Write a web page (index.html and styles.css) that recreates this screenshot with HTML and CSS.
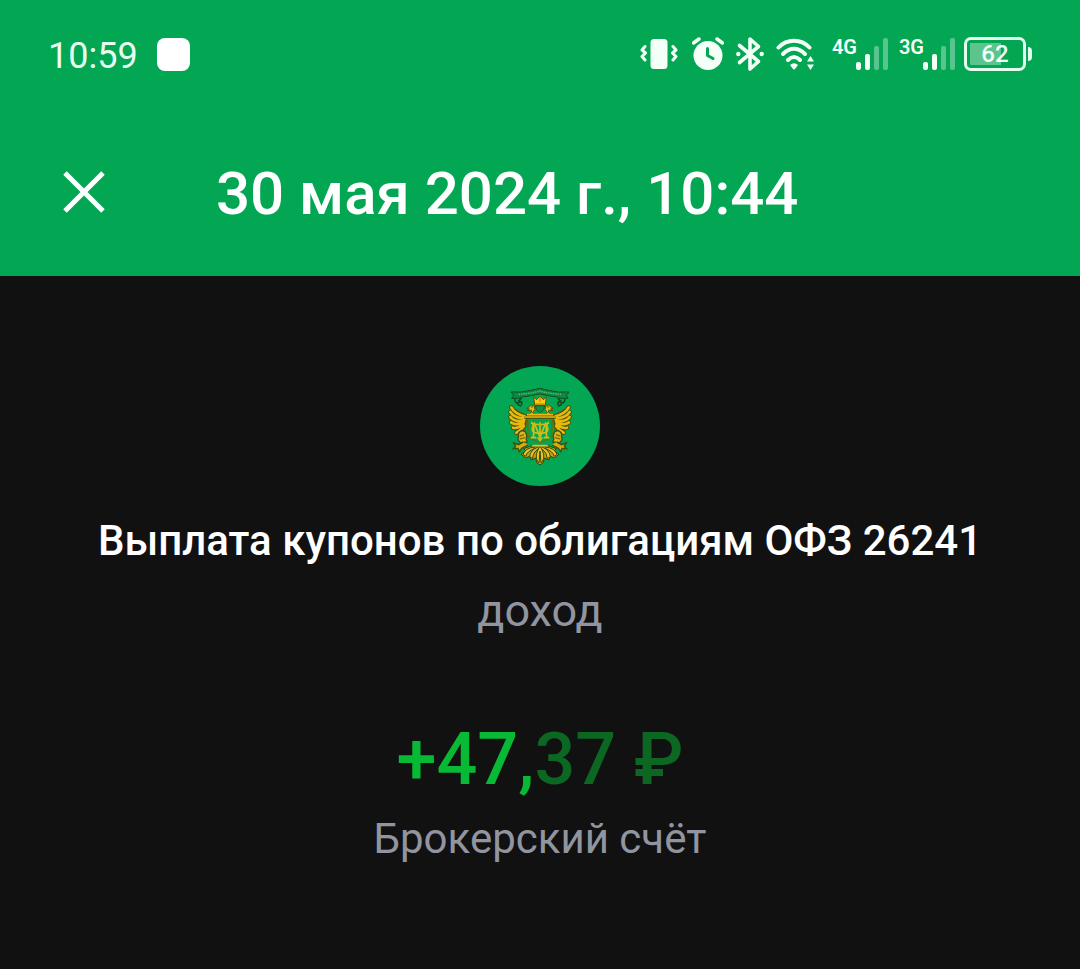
FILE: index.html
```html
<!DOCTYPE html>
<html lang="ru">
<head>
<meta charset="utf-8">
<meta name="viewport" content="width=device-width, initial-scale=1">
<title>Выплата купонов</title>
<link rel="stylesheet" href="styles.css">
</head>
<body>
<header class="top">
  <div class="status">
    <time class="clock">10:59</time>
    <span class="notice"></span>
    <div class="indicators">
      <svg class="vibrate" width="38" height="36" viewBox="0 0 38 36" aria-hidden="true">
        <rect x="10.500" y="3" width="17" height="30" rx="3.500" fill="#f4fff8"/>
        <path d="M5 10.500l-3 3.500 3.500 3-3.500 3.500 3 3.500M33 10.500l3 3.500-3.500 3 3.500 3.500-3 3.500" fill="none" stroke="#f4fff8" stroke-width="3" stroke-linejoin="round" stroke-linecap="round"/>
      </svg>
      <svg class="alarm" width="32" height="36" viewBox="0 0 32 36" aria-hidden="true">
        <circle cx="16" cy="19.500" r="14.500" fill="#f4fff8"/>
        <path d="M1.500 7L7 3M30.500 7L25 3" stroke="#f4fff8" stroke-width="3.500" stroke-linecap="round"/>
        <path d="M15.500 12.500V19.500L21 22.500" fill="none" stroke="#03a653" stroke-width="3" stroke-linecap="round" stroke-linejoin="round"/>
      </svg>
      <svg class="bluetooth" width="28" height="36" viewBox="0 0 28 36" aria-hidden="true">
        <path d="M3.500 9.500L22.500 25.500L14 33V3L22.500 10.500L3.500 26.500" fill="none" stroke="#f4fff8" stroke-width="3.600" stroke-linecap="round" stroke-linejoin="round"/>
        <circle cx="2.300" cy="18" r="2.200" fill="#f4fff8"/><circle cx="25.700" cy="18" r="2.200" fill="#f4fff8"/>
      </svg>
      <svg class="wifi" width="40" height="36" viewBox="0 0 40 36" aria-hidden="true">
        <g fill="none" stroke="#f4fff8" stroke-width="4" stroke-linecap="round">
          <path d="M2.500 11.500C11 2.500 25 2.500 33.500 11.500"/><path d="M7 18C14 11 22 11 29 18"/><path d="M12 24C16 20 20 20 24 24"/>
        </g>
        <path d="M14 29Q18 25.500 22 29L19 33Q18 34 17 33ZM31 25.500L34.500 20L38 25.500ZM31 28.500L34.500 34L38 28.500Z" fill="#f4fff8"/>
      </svg>
      <div class="network">
        <span class="band">4G</span>
        <svg class="bars" width="33" height="36" viewBox="0 0 33 36" aria-hidden="true"><g fill="#f4fff8"><rect y="26" width="5" height="8" rx="2"/><rect x="9" y="18" width="5" height="16" rx="2"/><g opacity=".35"><rect x="18" y="10" width="5" height="24" rx="2"/><rect x="27" y="2" width="5" height="32" rx="2"/></g></g></svg>
      </div>
      <div class="network">
        <span class="band">3G</span>
        <svg class="bars" width="33" height="36" viewBox="0 0 33 36" aria-hidden="true"><g fill="#f4fff8"><rect y="26" width="5" height="8" rx="2"/><rect x="9" y="18" width="5" height="16" rx="2"/><g opacity=".35"><rect x="18" y="10" width="5" height="24" rx="2"/><rect x="27" y="2" width="5" height="32" rx="2"/></g></g></svg>
      </div>
      <div class="battery"><span class="shell">62</span><span class="cap"></span></div>
    </div>
  </div>
  <div class="appbar">
    <button class="close" type="button" aria-label="Закрыть">
      <svg width="44" height="44" viewBox="0 0 44 44" aria-hidden="true"><path d="M3 3L41 41M41 3L3 41" stroke="#fff" stroke-width="5"/></svg>
    </button>
    <h1 class="title">30 мая 2024 г., 10:44</h1>
  </div>
</header>
<main class="details">
  <svg class="emblem" width="120" height="120" viewBox="30 30 360 360" role="img" aria-label="Эмблема Минфина">
    <defs>
      <path id="feathers" d="M124 154Q134 174 168 182M121 168Q132 186 165 188M121 183Q133 199 162 194M123 199Q137 210 161 199M129 215Q143 219 160 205M139 230Q151 225 162 210"/>
      <g id="side">
        <path d="M124 152L172 178L176 188L170 208L164 230L151 228L141 231L128 214Z" fill="#6b650a"/>
        <use href="#feathers" fill="none" stroke="#3f500d" stroke-width="13" stroke-linecap="round"/>
        <use href="#feathers" fill="none" stroke="#e8b80f" stroke-width="8" stroke-linecap="round"/>
        <path d="M204 177Q193 178 188 170Q199 162 193 150Q184 143 177 153L170 157L178 159L171 164L184 163Q187 168 180 173L169 178Z" fill="#e3b714" stroke="#59560b" stroke-width="3"/>
        <circle cx="186" cy="153" r="2" fill="#333d0a"/>
        <path d="M155 224Q142 230 146 242Q140 250 151 260L172 258Q166 247 171 240L165 226Z" fill="#e1b61c" stroke="#3b510d" stroke-width="4"/>
        <path d="M150 240L162 236M149 249L165 245" stroke="#806b08" stroke-width="4"/>
        <path d="M160 258L146 266L131 261L137 271L130 278L144 277L148 287L155 277L174 267" fill="#d8ac0d" stroke="#3b510d" stroke-width="4"/>
      </g>
    </defs>
    <circle cx="210" cy="210" r="180" fill="#03a653"/>
    <g stroke="#174b1d" stroke-width="3" stroke-linejoin="round">
      <path d="M123 108H151Q181 105 209 97Q238 105 267 108H297L289 118L294 127H272L263 123Q236 120 209 114Q182 120 155 123L147 127H125L131 118Z" fill="#078c48"/>
      <path d="M134 129Q136 145 148 139Q157 132 155 147M285 129Q283 145 271 139Q262 132 264 147M155 126l-11 11M263 126l11 11M142 145L154 151M276 145L264 151" fill="none" stroke-width="5"/>
    </g>
    <path d="M146 115Q181 113 209 105Q238 113 273 115" fill="none" stroke="#6db96b" stroke-width="4" stroke-dasharray="4 3"/>
    <use href="#side"/>
    <use href="#side" transform="matrix(-1 0 0 1 420 0)"/>
    <path d="M191 123L200 131L210 120L220 131L229 123L226 148H194Z" fill="#ffc710" stroke="#604b0d" stroke-width="3"/>
    <path d="M196 144H224M210 120V137" stroke="#a57b0a" stroke-width="3"/>
    <path d="M197 149H223Q224 164 210 169Q196 164 197 149" fill="#079449" stroke="#24551c" stroke-width="3"/>
    <path d="M174 183H246V234Q246 244 235 249L210 261L185 249Q174 244 174 234Z" fill="#03a653" stroke="#716b0b" stroke-width="4"/>
    <path d="M163 184H257" stroke="#4e5710" stroke-width="10"/>
    <path d="M163 183H257M171 176H249" stroke="#e8b80f" stroke-width="5"/>
    <g fill="none" stroke="#d2bd1b" stroke-width="5">
      <path d="M183 199Q195 202 190 244M237 199Q225 202 230 244M182 245H199M221 245H238M192 199L209 241M228 199L211 241M210 199V252"/>
      <path d="M207 206C184 198 176 235 207 231M213 206C236 198 244 235 213 231"/>
      <path d="M203 244L210 254L217 244"/>
    </g>
    <g stroke="#304b0d" stroke-width="3" stroke-linejoin="round">
      <path d="M184 270L161 278L167 284L153 295L167 306L178 301L184 312L197 306L200 320L210 327L220 320L223 306L236 312L242 301L253 306L267 295L253 284L259 278L236 270Z" fill="#c99e10"/>
      <path d="M194 273Q166 276 159 295L167 301Q171 286 194 277ZM226 273Q254 276 261 295L253 301Q249 286 226 277Z" fill="#edc12b"/>
      <path d="M202 274Q181 283 179 302L188 308Q188 290 206 277ZM218 274Q239 283 241 302L232 308Q232 290 214 277Z" fill="#edc12b"/>
      <path d="M208 273Q193 298 202 316L207 320L210 285L213 320L218 316Q227 298 212 273Z" fill="#edc12b"/>
      <path d="M187 269H233" stroke="#e7bd20" stroke-width="5"/>
    </g>
  </svg>
  <h2 class="name">Выплата купонов по облигациям ОФЗ 26241</h2>
  <p class="note kind">доход</p>
  <p class="amount">+47,<span class="fraction">37 ₽</span></p>
  <p class="note account">Брокерский счёт</p>
</main>
</body>
</html>
```
FILE: styles.css
```css
* { box-sizing: border-box; }
body {
  margin: 0;
  min-height: 100vh;
  background: #111112;
  color: #fff;
  font-family: Roboto, "Noto Sans", sans-serif;
}
h1, h2, p { margin: 0; }
.top { background: #03a653; }
.status {
  display: flex;
  align-items: center;
  height: 108px;
  padding: 0 48px;
}
.clock {
  padding-top: 4px;
  font-size: 36px;
  line-height: 40px;
  color: #e8fff0;
}
.notice {
  width: 33px;
  height: 33px;
  margin-left: 19px;
  border-radius: 8px;
  background: #fff;
}
.indicators {
  display: flex;
  align-items: center;
  margin-left: auto;
  color: #f4fff8;
}
.alarm { margin-left: 14px; }
.bluetooth { margin-left: 12px; }
.wifi { margin-left: 12px; }
.network { display: flex; align-items: flex-start; margin-left: 16px; }
.network + .network { margin-left: 10px; }
.band { font-size: 20px; line-height: 22px; font-weight: 600; }
.bars { margin-left: -1px; }
.battery { display: flex; align-items: center; margin-left: 8px; }
.shell {
  width: 62px;
  height: 34px;
  padding: 3px;
  border: 3px solid #e3fff0;
  border-radius: 7px;
  background: linear-gradient(90deg, #5bc58d 62%, transparent 62%) content-box;
  font-size: 24px;
  font-weight: 500;
  line-height: 22px;
  text-align: center;
}
.cap {
  width: 4px;
  height: 14px;
  margin-left: 2px;
  border-radius: 0 4px 4px 0;
  background: #e3fff0;
}
.appbar {
  display: flex;
  align-items: center;
  min-height: 168px;
  padding: 0 48px;
}
.close {
  display: grid;
  place-items: center;
  width: 72px;
  height: 72px;
  padding: 0;
  border: 0;
  background: transparent;
  cursor: pointer;
}
.title {
  margin-left: 96px;
  padding-top: 4px;
  font-size: 60px;
  font-weight: 500;
  line-height: 72px;
}
.details {
  display: flex;
  flex-direction: column;
  align-items: center;
  padding: 90px 48px;
  text-align: center;
}
.name {
  margin-top: 30px;
  font-size: 42px;
  font-weight: 500;
  line-height: 50px;
}
.note {
  color: #9195a0;
  font-size: 42px;
  line-height: 50px;
}
.kind { margin-top: 20px; font-size: 45px; }
.amount {
  margin-top: 82px;
  color: #08b935;
  font-size: 72px;
  font-weight: 500;
  line-height: 84px;
}
.fraction { color: #0c6723; }
.account { margin-top: 12px; }
```
